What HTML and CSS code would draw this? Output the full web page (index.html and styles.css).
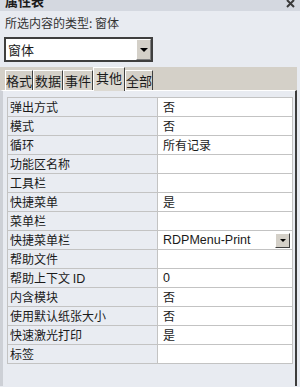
FILE: index.html
```html
<!DOCTYPE html>
<html lang="zh-CN">
<head>
<meta charset="utf-8">
<title>属性表</title>
<link rel="stylesheet" href="styles.css">
</head>
<body>
<div class="titlebar">
  <div class="title">属性表</div>
  <svg class="close" width="9" height="8" viewBox="0 0 9 8"><path d="M1 0 L8 7 M8 0 L1 7" stroke="#3a3a3a" stroke-width="2"/></svg>
</div>
<div class="seltype">所选内容的类型: 窗体</div>
<div class="combo">
  <div class="combo-text">窗体</div>
  <div class="combo-btn"><span class="tri"></span></div>
</div>
<div class="sheet">
  <div class="tabs">
    <div class="tab">格式</div>
    <div class="tab">数据</div>
    <div class="tab">事件</div>
    <div class="tab active">其他</div>
    <div class="tab">全部</div>
  </div>
  <div class="panel">
    <div class="grid">
      <div class="row"><div class="k">弹出方式</div><div class="v">否</div></div>
      <div class="row"><div class="k">模式</div><div class="v">否</div></div>
      <div class="row"><div class="k">循环</div><div class="v">所有记录</div></div>
      <div class="row"><div class="k">功能区名称</div><div class="v"></div></div>
      <div class="row"><div class="k">工具栏</div><div class="v"></div></div>
      <div class="row"><div class="k">快捷菜单</div><div class="v">是</div></div>
      <div class="row"><div class="k">菜单栏</div><div class="v"></div></div>
      <div class="row"><div class="k">快捷菜单栏</div><div class="v"><span class="lat grow">RDPMenu-Print</span><span class="mini-btn"><span class="tri small"></span></span></div></div>
      <div class="row"><div class="k">帮助文件</div><div class="v"></div></div>
      <div class="row"><div class="k">帮助上下文 <span class="lat">ID</span></div><div class="v"><span class="lat">0</span></div></div>
      <div class="row"><div class="k">内含模块</div><div class="v">否</div></div>
      <div class="row"><div class="k">使用默认纸张大小</div><div class="v">否</div></div>
      <div class="row"><div class="k">快速激光打印</div><div class="v">是</div></div>
      <div class="row"><div class="k">标签</div><div class="v"></div></div>
    </div>
  </div>
</div>
</body>
</html>
```

FILE: styles.css
```css
html, body {
  margin: 0;
  padding: 0;
}
body {
  width: 300px;
  height: 387px;
  overflow: hidden;
  background: #e8ebf1;
  font-family: "Noto Sans CJK SC", sans-serif;
  font-size: 12px;
  color: #1a1a1a;
}
.titlebar {
  height: 11px;
  background: #d4d8e0;
  display: flex;
  justify-content: space-between;
  overflow: hidden;
  padding: 0 5px 0 5px;
}
.title {
  font-size: 13px;
  font-weight: bold;
  line-height: 13px;
  margin-top: -6px;
}
.close {
  display: block;
  margin-top: 0;
}
.seltype {
  padding: 3px 5px 0;
  line-height: 17px;
  color: #333;
}
.combo {
  margin: 6px 0 0 4px;
  width: 149px;
  height: 25px;
  box-sizing: border-box;
  border: 2px solid #3f3f3f;
  background: #fff;
  display: flex;
}
.combo-text {
  flex: 1;
  font-size: 13px;
  line-height: 21px;
  padding-left: 2px;
}
.combo-btn {
  width: 15px;
  box-sizing: border-box;
  background: #d4d0c8;
  border-style: solid;
  border-width: 1px;
  border-color: #fff #808080 #808080 #fff;
  display: flex;
  align-items: center;
  justify-content: center;
}
.tri {
  width: 0;
  height: 0;
  border-left: 4px solid transparent;
  border-right: 4px solid transparent;
  border-top: 4px solid #000;
}
.tri.small {
  border-left-width: 3px;
  border-right-width: 3px;
  border-top-width: 3px;
}
.sheet {
  margin: 5px 3px 0 0;
}
.tabs {
  height: 23px;
  background: #d4d0c8;
  display: flex;
  align-items: flex-end;
  padding-left: 5px;
  position: relative;
  z-index: 1;
}
.tab {
  height: 20px;
  box-sizing: border-box;
  border-left: 1px solid #fff;
  border-top: 1px solid #fff;
  border-right: 1px solid #404040;
  padding: 0 1px;
  font-size: 13px;
  line-height: 19px;
  background: #d4d0c8;
}
.tab:first-child,
.tab:last-child {
  padding: 0;
}
.tab.active {
  height: 24px;
  margin-bottom: -1px;
  padding: 0 2px;
  line-height: 20px;
  background: #dcd9d2;
}
.panel {
  height: 296px;
  box-sizing: border-box;
  border-top: 1px solid #fff;
  border-left: 3px solid #cdd0d6;
  border-right: 2px solid #3c3c3c;
  padding: 6px 2px 0 4px;
}
.grid {
  border: 1px solid #c3c3c3;
  border-bottom: none;
}
.row {
  display: flex;
  height: 19px;
  box-sizing: border-box;
  border-bottom: 1px solid #c3c3c3;
}
.k {
  width: 150px;
  box-sizing: border-box;
  border-right: 1px solid #c3c3c3;
  padding-left: 2px;
  background: #e9ecf2;
  line-height: 18px;
  white-space: nowrap;
}
.v {
  flex: 1;
  background: #fff;
  padding-left: 5px;
  line-height: 18px;
  display: flex;
  align-items: center;
}
.lat {
  font-family: "Liberation Sans", sans-serif;
  font-size: 12.5px;
}
.grow {
  flex: 1;
}
.mini-btn {
  width: 15px;
  height: 15px;
  box-sizing: border-box;
  margin-right: 2px;
  background: #d4d0c8;
  border-style: solid;
  border-width: 1px;
  border-color: #fff #404040 #404040 #fff;
  display: flex;
  align-items: center;
  justify-content: center;
}
```
